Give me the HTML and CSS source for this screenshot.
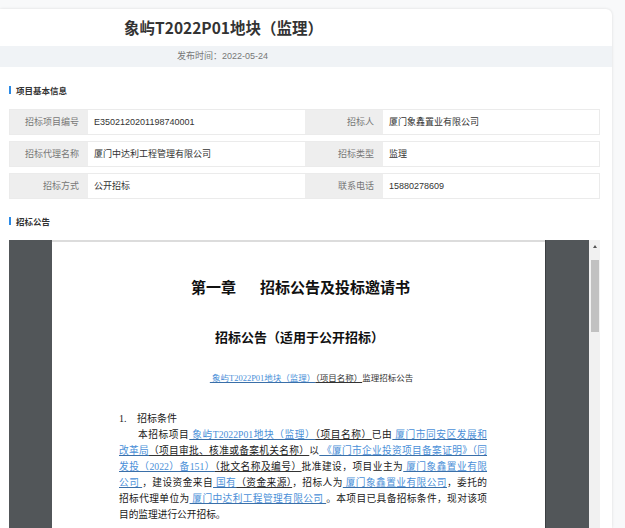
FILE: index.html
```html
<!DOCTYPE html>
<html lang="zh-CN">
<head>
<meta charset="utf-8">
<title>象屿T2022P01地块（监理）</title>
<link rel="stylesheet" href="styles.css">
</head>
<body>
<div class="card">
  <div class="head"><h1 class="title">象屿T2022P01地块（监理）</h1></div>
  <div class="dateband"><div class="date">发布时间：2022-05-24</div></div>
  <div class="content">
    <div class="sec"><span class="bar"></span>项目基本信息</div>
    <div class="table">
      <div class="row">
        <div class="lab">招标项目编号</div><div class="val">E3502120201198740001</div>
        <div class="lab">招标人</div><div class="val">厦门象鑫置业有限公司</div>
      </div>
      <div class="row">
        <div class="lab">招标代理名称</div><div class="val">厦门中达利工程管理有限公司</div>
        <div class="lab">招标类型</div><div class="val">监理</div>
      </div>
      <div class="row">
        <div class="lab">招标方式</div><div class="val">公开招标</div>
        <div class="lab">联系电话</div><div class="val">15880278609</div>
      </div>
    </div>
    <div class="sec sec2"><span class="bar"></span>招标公告</div>
    <div class="viewer">
      <div class="side"></div>
      <div class="page">
        <div class="chap"><span class="chap-no">第一章</span>招标公告及投标邀请书</div>
        <div class="sub">招标公告（适用于公开招标）</div>
        <div class="proj"><span class="b">&nbsp;象屿T2022P01地块（监理）</span><span class="u">（项目名称）</span>监理招标公告</div>
        <div class="h1"><span class="num">1.</span>招标条件</div>
        <div class="para">
          <div class="ln first">本招标项目<span class="b">&nbsp;象屿T2022P01地块（监理）</span><span class="u">（项目名称）</span>已由<span class="b">&nbsp;厦门市同安区发展和</span></div>
          <div class="ln"><span class="b">改革局</span><span class="u">（项目审批、核准或备案机关名称）</span>以<span class="b">&nbsp;《厦门市企业投资项目备案证明》（同</span></div>
          <div class="ln"><span class="b">发投（2022）备151）</span><span class="u">（批文名称及编号）</span>批准建设，项目业主为<span class="b">&nbsp;厦门象鑫置业有限</span></div>
          <div class="ln"><span class="b">公司&nbsp;</span>，建设资金来自<span class="b">&nbsp;国有</span><span class="u">（资金来源）</span>，招标人为<span class="b">&nbsp;厦门象鑫置业有限公司</span>，委托的</div>
          <div class="ln">招标代理单位为<span class="b">&nbsp;厦门中达利工程管理有限公司&nbsp;</span>。本项目已具备招标条件，现对该项</div>
          <div class="ln last">目的监理进行公开招标。</div>
        </div>
      </div>
      <div class="side side-r"></div>
      <div class="scroll"><span class="arrow"></span><span class="thumb"></span></div>
    </div>
  </div>
</div>
</body>
</html>
```

FILE: styles.css
```css
html, body {
  margin: 0;
  padding: 0;
  height: 100%;
  overflow: hidden;
  background: #f8f9fa;
}
.card {
  margin-top: 9px;
  width: 612px;
  height: calc(100vh - 9px);
  display: flex;
  flex-direction: column;
  background: #fff;
  border-radius: 0 6px 0 0;
  box-shadow: 0 0 3px rgba(0, 0, 0, 0.12);
}
.head {
  height: 37px;
  flex: none;
}
.title {
  margin: 0;
  width: 447px;
  text-align: center;
  font: bold 15.5px/37px "Noto Sans CJK SC", sans-serif;
  color: #333;
}
.dateband {
  height: 21px;
  flex: none;
  background: #f0f3f6;
}
.date {
  width: 445px;
  text-align: center;
  font: 9px/21px "Liberation Sans", "Noto Sans CJK SC", sans-serif;
  color: #777;
}
.content {
  flex: 1;
  min-height: 0;
  display: flex;
  flex-direction: column;
  padding: 0 12px 0 9px;
}
.sec {
  margin-top: 16px;
  height: 14px;
  flex: none;
  display: flex;
  align-items: center;
  gap: 5px;
  font: bold 8.5px/14px "Noto Sans CJK SC", sans-serif;
  color: #333;
}
.sec2 {
  margin-top: 15px;
}
.bar {
  width: 2px;
  height: 8px;
  background: #2b8ae6;
}
.table {
  margin-top: 12px;
  flex: none;
  display: flex;
  flex-direction: column;
  gap: 6px;
}
.row {
  display: grid;
  grid-template-columns: 78px 217px 78px 218px;
  height: 26px;
  box-sizing: border-box;
  border: 1px solid #ebebeb;
  font: 9px/24px "Liberation Sans", "Noto Sans CJK SC", sans-serif;
}
.lab {
  background: #eeeeee;
  color: #777;
  text-align: right;
  padding-right: 9px;
}
.val {
  color: #333;
  padding-left: 6px;
}
.viewer {
  margin-top: 12px;
  flex: 1;
  min-height: 0;
  overflow: hidden;
  display: flex;
}
.side {
  width: 43px;
  background: #525659;
}
.side-r {
  width: 43px;
  border-left: 1px solid #3c3f42;
}
.page {
  width: 493px;
  box-sizing: border-box;
  border-top: 2px solid #dcdcdc;
  background: #fff;
  color: #1a1a1a;
  overflow: hidden;
  font-family: "Liberation Serif", "Noto Sans CJK SC", serif;
}
.scroll {
  width: 11px;
  background: #f1f1f1;
  display: flex;
  flex-direction: column;
  align-items: center;
}
.arrow {
  margin-top: 5px;
  width: 0;
  height: 0;
  border-left: 2.5px solid transparent;
  border-right: 2.5px solid transparent;
  border-bottom: 3px solid #555;
}
.thumb {
  margin-top: 12px;
  width: 8px;
  height: 72px;
  background: #c1c1c1;
}
.chap {
  margin-top: 35px;
  padding-left: 4px;
  text-align: center;
  font: bold 15px/20px "Noto Sans CJK SC", sans-serif;
  color: #111;
}
.chap-no {
  margin-right: 24px;
}
.sub {
  margin-top: 31px;
  padding-left: 2px;
  text-align: center;
  font: bold 13px/18px "Noto Sans CJK SC", sans-serif;
  color: #111;
}
.proj {
  margin-top: 26px;
  padding-left: 26px;
  text-align: center;
  font-size: 8.5px;
  line-height: 12px;
  color: #333;
}
.h1 {
  margin-top: 27px;
  padding-left: 67px;
  font-size: 10px;
  line-height: 16px;
}
.num {
  display: inline-block;
  width: 18px;
}
.para {
  margin-left: 67px;
  width: 368px;
  font-size: 9.7px;
  line-height: 16px;
}
.ln {
  white-space: nowrap;
  text-align: justify;
  text-align-last: justify;
}
.ln.first {
  text-indent: 19px;
}
.ln.last {
  text-align-last: left;
}
.u {
  text-decoration: underline;
  text-decoration-color: #333;
}
.b {
  color: #4a8fd8;
  text-decoration: underline;
  text-decoration-color: #3a6fa8;
}
```
